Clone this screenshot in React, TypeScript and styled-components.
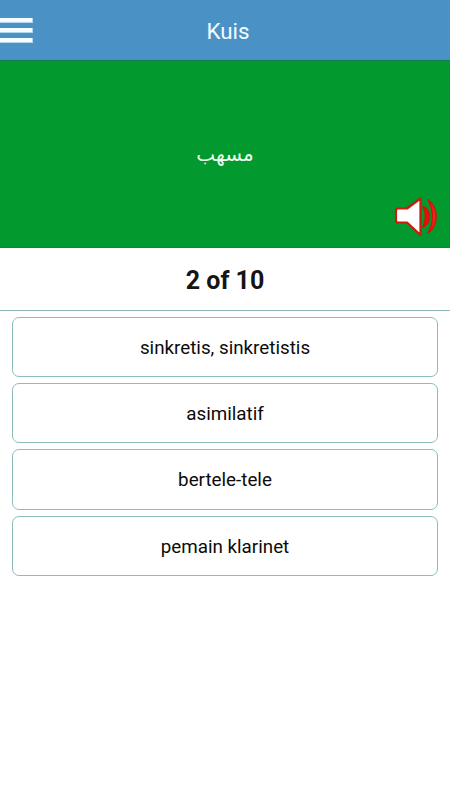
import React from "react";
import styled, { createGlobalStyle } from "styled-components";

const GlobalStyle = createGlobalStyle`
  * { box-sizing: border-box; }
  body { margin: 0; background: #fff; font-family: Roboto, sans-serif; }
  button { font: inherit; color: inherit; padding: 0; margin: 0; background: none; border: 0; }
`;

const Screen = styled.main`
  display: flex;
  flex-direction: column;
  min-height: 800px;
  background: #fff;
`;

const TopBar = styled.header`
  display: grid;
  grid-template-columns: 33px 1fr 27px;
  align-items: center;
  height: 60px;
  background: #4a92c6;
  padding-top: 1px;
`;

const MenuButton = styled.button`
  display: flex;
  flex-direction: column;
  gap: 5px;
`;

const MenuBar = styled.span`
  width: 33px;
  height: 5px;
  background: #f4fcff;
  border: solid #b4d6ec;
  border-width: 0 1px 1px 0;
`;

const Title = styled.h1`
  margin: 0;
  text-align: center;
  font-size: 22.4px;
  font-weight: 400;
  line-height: 28px;
  color: #f4fbff;
`;

const WordPanel = styled.section`
  display: grid;
  grid-template-rows: 1fr;
  height: 188px;
  background: #029a2f;
  border-top: 1px solid #127a50;
  border-bottom: 1px solid #078a30;
`;

const Word = styled.div`
  grid-area: 1 / 1;
  place-self: center;
  font-family: "DejaVu Sans", sans-serif;
  font-size: 20px;
  line-height: 30px;
  color: #effff0;
`;

const SpeakerButton = styled.button`
  grid-area: 1 / 1;
  place-self: end;
  width: 46px;
  height: 42px;
  margin: 0 10px 9px 0;
  svg { display: block; }
`;

const Counter = styled.h2`
  display: flex;
  align-items: center;
  justify-content: center;
  height: 63px;
  margin: 0;
  padding-top: 2px;
  font-size: 25px;
  font-weight: 700;
  color: #151515;
  border-bottom: 1px solid #8fb5b8;
`;

const Answers = styled.div`
  display: flex;
  flex-direction: column;
  gap: 6px;
  padding: 6px 12px;
`;

const Answer = styled.button`
  height: 60.2px;
  padding-top: 2px;
  border: 1px solid #8dbdbb;
  border-radius: 7px;
  font-size: 18.8px;
  color: #0b0b0b;
`;

const answers = ["sinkretis, sinkretistis", "asimilatif", "bertele-tele", "pemain klarinet"];

const SpeakerIcon = () => (
  <svg width="46" height="42" viewBox="0 0 46 42" fill="none">
    <path d="M2 14.500Q2 12.500 4 12.500H13L26.500 2.500V39L13 26.500H4Q2 26.500 2 24.500Z" fill="#fff" stroke="#c81c0c" strokeWidth="2.200" strokeLinejoin="round" />
    <path d="M29 10.500Q35.500 14 35.500 20.500Q35.500 27.500 29 31Q31.500 26 31.500 20.500Q31.500 15.500 29 10.500Z" fill="#f00a0a" stroke="#d31509" strokeWidth="1.600" strokeLinejoin="round" />
    <path d="M34 3.500Q42 10.500 42 20.500Q42 31 34 37Q38.500 30 38.500 20.500Q38.500 11.500 34 3.500Z" fill="#f0281c" stroke="#d31509" strokeWidth="1.600" strokeLinejoin="round" />
  </svg>
);

export default function App() {
  return (
    <>
      <GlobalStyle />
      <Screen>
        <TopBar>
          <MenuButton aria-label="Menu">
            <MenuBar />
            <MenuBar />
            <MenuBar />
          </MenuButton>
          <Title>Kuis</Title>
        </TopBar>
        <WordPanel>
          <Word lang="ar" dir="rtl">مسهب</Word>
          <SpeakerButton aria-label="Audio">
            <SpeakerIcon />
          </SpeakerButton>
        </WordPanel>
        <Counter>2 of 10</Counter>
        <Answers>
          {answers.map((answer) => (
            <Answer key={answer}>{answer}</Answer>
          ))}
        </Answers>
      </Screen>
    </>
  );
}
